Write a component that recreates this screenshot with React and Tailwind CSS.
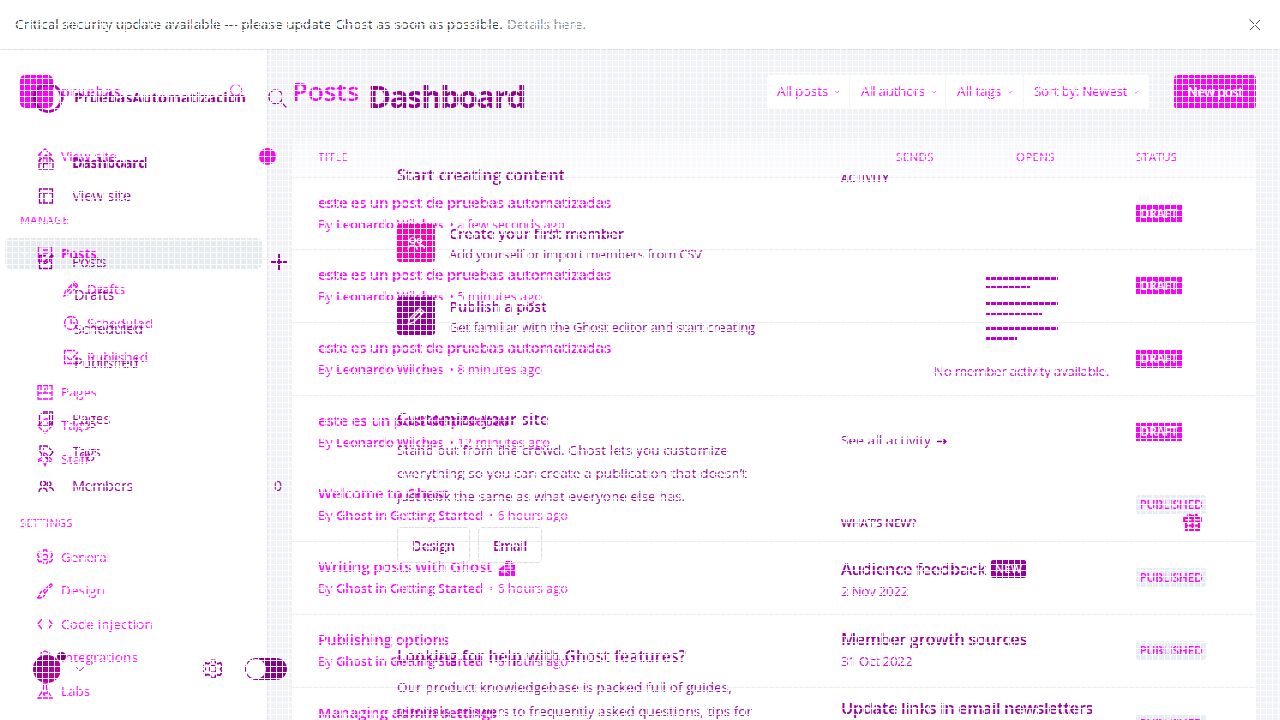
import React, { useLayoutEffect, useRef, useState } from "react";

const SANS = "font-['Open_Sans','Noto_Sans',sans-serif]";

// Single text run whose letter spacing is tuned to a fixed run width.
function Run({ w, className = "", children }) {
  const ref = useRef(null);
  const [spacing, setSpacing] = useState(0);
  useLayoutEffect(() => {
    const natural = ref.current.getBoundingClientRect().width;
    setSpacing((w - natural) / String(children).length);
  }, []);
  return (
    <span ref={ref} className={"inline-block shrink-0 whitespace-nowrap " + className} style={{ letterSpacing: spacing + "px" }}>
      {children}
    </span>
  );
}

function Icon({ className = "size-4", children, sw = 1.3 }) {
  return (
    <svg viewBox="0 0 16 16" className={"shrink-0 " + className} fill="none" stroke="currentColor" strokeWidth={sw}>
      {children}
    </svg>
  );
}

const icons = {
  home: <path d="M1 7.500 8 1l7 6.500M3 6v9h3v-5h4v5h3V6" />,
  house: <path d="M1 15V6.500L8 1l7 5.500V15zM5.500 15V9.500h5V15" />,
  browser: <path d="M1.500 1h13v14h-13zM1.500 5h13M6 5v10" />,
  posts: <path d="M1.500.7h13v14.600h-13zM5.500 4h6M5.500 7h6M5.500 10h3M1.500 11h3v4" />,
  edit: <path d="M8 1.500H1.500v13h12V8M6 10l1-3 7-6 1 1-6.500 7z" />,
  pencil: <path d="M1 15l1.500-5L11.500 1 15 4.500 6 13.500zM10 2.500 13.500 6M4 11l7-7" />,
  clock: <><circle cx="8" cy="8" r="6.500" /><path d="M8 4v4h4" /></>,
  published: <path d="M14 8v6.500H1.500v-13H12M4 8l3.500 3.500L15 3" />,
  pages: <path d="M1 1.500h14v13.500H1zM1 9h14M4 1.500V6M8 4v5M11 2v4" />,
  page: <path d="M3.500 3h8v12H1.500V4zM5 3V1h9.500v12h-3M11.500 4v11" />,
  tag: <path d="M1 8 8 1h3l4 4v3l-7 7zM10 5h1" />,
  tag2: <path d="M2 2h7l6 6-5.500 7L2 8zM5 5h1" />,
  staff: <path d="M5 7a3 3 0 1 1 5 0M1 12c1-4 5-4 7 3 1-5 4-7 7-3M1 9l3-2M12 6l3 3" />,
  members: <path d="M1 14c0-5 8-5 8 0M5 3a2.500 2.500 0 1 0 0 5 2.500 2.500 0 0 0 0-5M11 4a2 2 0 1 0 0 4 2 2 0 0 0 0-4M10.500 10c3-1 5 1 5 3" />,
  gear: <><circle cx="8" cy="8" r="2.700" /><path d="M6.500 1h3l.5 2 2 .8L14 3l1.500 3-1.500 2 1.500 2.500L13.500 13l-2-.5-1.500.8-.5 2h-3l-.5-2-2-1-2 .7-1.500-3L2 8 .5 6 2 3l2 .8L6 3z" /></>,
  brush: <path d="M6 8 14 .8l1.200 1.200L8 10zM6 8c-4 0-2 5-5.500 6.800C4 15.500 8 14 8 10" />,
  code: <path d="M5 3 .8 8 5 13M11 3l4.200 5L11 13" />,
  modules: <path d="M8 1 4 3v4l4 2 4-2V3zM4 7 1 9v4l3 2 4-2V9M12 7l3 2v4l-3 2-4-2V9" />,
  labs: <path d="M5.500 1h5M6.500 1v5L1 15h14L9.500 6V1M4 10h8M6 12l1-1 1 2" />,
  search: <><circle cx="7" cy="7" r="5.500" /><path d="m11 11 4.500 4.500" /></>,
  chevron: <path d="m2 5 6 6 6-6" />,
  plus: <path d="M8 0v16M0 8h16" />,
  gift: <path d="M1 5h14v3H1zM2.500 8h11v7h-11zM8 5v10M8 5C2 5 4 0 8 4c4-4 6 1 0 1M2.500 11.500h11" />,
};

function NavA({ icon, w, children }) {
  return (
    <div className="flex h-5 items-center gap-2 pl-[37px]">
      <Icon>{icons[icon]}</Icon>
      <Run w={w} className="text-[13.500px]">{children}</Run>
    </div>
  );
}

function SubA({ icon, w, children }) {
  return (
    <div className="flex h-5 items-center gap-2 pl-[63px]">
      <Icon>{icons[icon]}</Icon>
      <Run w={w} className="text-[13.500px]">{children}</Run>
    </div>
  );
}

function NavB({ icon, w, bold, children }) {
  return (
    <div className="flex h-5 items-center gap-[18px] pl-[38px]">
      <Icon>{icons[icon]}</Icon>
      <Run w={w} className={bold ? "pt-px text-[14.500px] font-bold" : "text-[14.500px]"}>{children}</Run>
    </div>
  );
}

function SidebarA() {
  return (
    <aside className="w-[268px] shrink-0 border-r border-[#e3e7ec] bg-white text-[#ff00ff]">
      <div className="mt-6 flex h-[34px] items-center pl-5">
        <div className="size-[33px] rounded-[5px] bg-[#ff00ff]" />
        <Run w={60} className="ml-2 text-[14px] font-semibold">pruebas</Run>
        <Icon className="ml-[108px] size-4" sw={1}>{icons.search}</Icon>
      </div>
      <div className="mt-[38px] flex h-5 items-center">
        <NavA icon="home" w={56}>View site</NavA>
        <span className="relative ml-auto mr-[-9px] size-[17px] shrink-0 rounded-full bg-[#ff00ff]" />
      </div>
      <div className="mt-11 flex h-5 items-center pl-5"><Run w={49} className="text-[11px]">MANAGE</Run></div>
      <div className="ml-[5px] mr-[5px] mt-2 flex h-[31px] items-center rounded-[5px] bg-[#e5eaef] pl-4">
        <Icon className="size-2 text-white" sw={2}>{icons.chevron}</Icon>
        <Icon className="ml-2 size-4">{icons.posts}</Icon>
        <Run w={36} className="ml-2 pt-px text-[13.500px] font-bold">Posts</Run>
      </div>
      <div className="mt-[10px] flex flex-col gap-[14px]">
        <SubA icon="pencil" w={38}>Drafts</SubA>
        <SubA icon="clock" w={66}>Scheduled</SubA>
        <SubA icon="published" w={61}>Published</SubA>
      </div>
      <div className="mt-[15px] flex flex-col gap-[13.500px]">
        <NavA icon="pages" w={36}>Pages</NavA>
        <NavA icon="tag" w={28}>Tags</NavA>
        <NavA icon="staff" w={28}>Staff</NavA>
      </div>
      <div className="mt-11 flex h-5 items-center pl-5"><Run w={53} className="text-[11px]">SETTINGS</Run></div>
      <div className="mt-[14px] flex flex-col gap-[13.500px]">
        <NavA icon="gear" w={49}>General</NavA>
        <NavA icon="brush" w={44}>Design</NavA>
        <NavA icon="code" w={92}>Code injection</NavA>
        <NavA icon="modules" w={77}>Integrations</NavA>
        <NavA icon="labs" w={29}>Labs</NavA>
      </div>
    </aside>
  );
}

const rows = [
  ["este es un post de pruebas automatizadas", 293, "Leonardo Wilches", 107, "• a few seconds ago", 116],
  ["este es un post de pruebas automatizadas", 293, "Leonardo Wilches", 107, "• 5 minutes ago", 93],
  ["este es un post de pruebas automatizadas", 293, "Leonardo Wilches", 107, "• 8 minutes ago", 93],
  ["este es un post de pruebas", 191, "Leonardo Wilches", 107, "• 12 minutes ago", 101],
  ["Welcome to Ghost", 130, "Ghost in Getting Started", 147, "• 6 hours ago", 79],
  ["Writing posts with Ghost", 174, "Ghost in Getting Started", 147, "• 6 hours ago", 79],
  ["Publishing options", 131, "Ghost in Getting Started", 147, "• 6 hours ago", 79],
  ["Managing admin settings", 179, "Ghost in Getting Started", 147, "• 6 hours ago", 79],
];

function Stamp() {
  return (
    <svg viewBox="0 0 18 16" className="ml-1.5 mt-[3px] h-4 w-[18px]" fill="#ff00ff">
      <path d="M8 1h6l1 4h2v11H1V9l4-4z" />
      <path d="M2 8l5-4M6 8h9M11 2v6M3 12h6l2 2" stroke="#fff" strokeWidth="1" />
    </svg>
  );
}

function MainA() {
  return (
    <main className="flex min-w-0 flex-1 flex-col bg-[#f1f2f5] pl-6 pr-6 text-[#ff00ff]">
      <div className="mt-6 flex h-[35px] shrink-0 items-center">
        <Run w={67} className="text-[26px] font-semibold">Posts</Run>
        <div className="ml-auto flex h-[34px] items-center rounded bg-white text-[13.500px]">
          <div className="flex h-full w-[83px] items-center gap-1.5 border-r border-[#f2f3f6] pl-[10px]"><Run w={51}>All posts</Run><Icon className="size-1.5" sw={1.5}>{icons.chevron}</Icon></div>
          <div className="flex h-full w-[96px] items-center gap-1.5 border-r border-[#f2f3f6] pl-[11px]"><Run w={64}>All authors</Run><Icon className="size-1.5" sw={1.5}>{icons.chevron}</Icon></div>
          <div className="flex h-full w-[78px] items-center gap-1.5 border-r border-[#f2f3f6] pl-[11px]"><Run w={44}>All tags</Run><Icon className="size-1.5" sw={1.5}>{icons.chevron}</Icon></div>
          <div className="flex h-full w-[125px] items-center gap-1.5 pl-[10px]"><Run w={93}>Sort by: Newest</Run><Icon className="size-1.5" sw={1.5}>{icons.chevron}</Icon></div>
        </div>
        <div className="ml-[25px] flex h-[34px] w-[82px] items-center justify-center rounded bg-[#ff00ff] pt-0.5 text-white"><Run w={55} className="text-[13.500px] font-semibold">New post</Run></div>
      </div>
      <div className="mt-[29px] min-h-0 flex-1 overflow-hidden rounded-t bg-white shadow-[0_0_1px_#dde2e8]">
        <div className="flex h-10 items-center border-b border-[#e5eef5] bg-linear-to-b from-[#f7f8fa] to-[#fcfcfe] pb-0.5 pl-[26px] text-[11.500px]">
          <div className="w-[578px]"><Run w={30}>TITLE</Run></div>
          <div className="w-[120px]"><Run w={38}>SENDS</Run></div>
          <div className="w-[120px]"><Run w={39}>OPENS</Run></div>
          <Run w={41}>STATUS</Run>
        </div>
        {rows.map(([title, tw, by, bw, ago, aw], i) => (
          <div key={i} className="flex h-[73px] border-b border-[#e5eef5] pl-[26px] nth-2:h-[72px]">
            <div className="w-[818px] pt-[14px]">
              <div className="flex h-5 items-center"><Run w={tw} className="text-[15px] font-semibold">{title}</Run>{i === 5 && <Stamp />}</div>
              <div className="mt-[3px] flex h-5 items-center text-[13px]"><Run w={14}>By</Run><Run w={bw} className="ml-1 font-semibold">{by}</Run><Run w={aw} className="ml-1.5">{ago}</Run></div>
            </div>
            <div className="pt-[27px]">
              {i < 4
                ? <div className="flex h-[18px] w-[46px] items-center justify-center bg-[#ff00ff] text-white"><Run w={37} className="text-[12px] font-semibold">DRAFT</Run></div>
                : <div className="-mt-px flex h-[19px] w-[70px] items-center justify-center rounded-[3px] bg-[#e5eef5]"><Run w={63} className="text-[12px] font-semibold">PUBLISHED</Run></div>}
            </div>
          </div>
        ))}
      </div>
    </main>
  );
}

function SidebarB() {
  return (
    <aside className="flex w-[292px] shrink-0 flex-col text-[#99009b]">
      <div className="mt-8 flex h-[31px] items-center pl-[33px]">
        <div className="size-[30px] rounded-full border-[3px] border-[#b000b0] border-l-[#770077]" />
        <Run w={172} className="ml-[11px] pt-px text-[14.500px] font-bold">PruebasAutomatizacion</Run>
        <Icon className="ml-[21px] size-[20px]" sw={1}>{icons.search}</Icon>
      </div>
      <div className="mt-[39px]"><NavB icon="house" w={75} bold>Dashboard</NavB></div>
      <div className="mt-[14px]"><NavB icon="browser" w={59}>View site</NavB></div>
      <div className="mt-[46px] flex items-center">
        <NavB icon="edit" w={34}>Posts</NavB>
        <Icon className="ml-auto mr-[5px] size-4" sw={2}>{icons.plus}</Icon>
      </div>
      <div className="mt-[13px] flex flex-col gap-[14px] pl-[74px] text-[14.500px]">
        <div className="flex h-5 items-center"><Run w={40}>Drafts</Run></div>
        <div className="flex h-5 items-center"><Run w={69}>Scheduled</Run></div>
        <div className="flex h-5 items-center"><Run w={64}>Published</Run></div>
      </div>
      <div className="mt-9"><NavB icon="page" w={38}>Pages</NavB></div>
      <div className="mt-[13px]"><NavB icon="tag2" w={28}>Tags</NavB></div>
      <div className="mt-[13px] flex items-center">
        <NavB icon="members" w={61}>Members</NavB>
        <span className="ml-auto mr-[10px] text-[14px]">0</span>
      </div>
      <div className="mt-[159px] flex h-7 items-center pl-[33px]">
        <div className="relative size-7 rounded-full bg-linear-to-br from-[#80007c] to-[#d500aa]"><span className="absolute -right-[5px] -top-[3px] size-[9px] rounded-full bg-[#80007c]" /></div>
        <Icon className="ml-[14px] size-2.5" sw={1.5}>{icons.chevron}</Icon>
        <Icon className="ml-[118px] size-5">{icons.gear}</Icon>
        <div className="ml-[22px] flex h-[22px] w-[42px] items-center rounded-full bg-[#880088] pl-px"><span className="size-5 rounded-full bg-white" /></div>
      </div>
    </aside>
  );
}

function Line({ w, className = "", children }) {
  return <div className="flex h-5 items-center"><Run w={w} className={className}>{children}</Run></div>;
}

function Step({ tone, icon, titleWidth, title, textWidth, text }) {
  return (
    <div className="flex h-[42px] items-center gap-[14px]">
      <div className={"mt-[-2px] flex size-[38px] shrink-0 items-center justify-center rounded-[3px] text-white " + tone}>
        <Icon className="size-[18px]" sw={1.2}>{icons[icon]}</Icon>
      </div>
      <div>
        <Line w={titleWidth} className="text-[14.500px] font-semibold">{title}</Line>
        <div className="mt-px"><Line w={textWidth} className="pt-px text-[13px]">{text}</Line></div>
      </div>
    </div>
  );
}

function MainB() {
  return (
    <div className="flex flex-1 text-[#99009b]">
      <div className="ml-[76px] flex w-[473px] flex-col">
        <div className="mt-[26px] flex h-10 items-center"><Run w={157} className="text-[31px] font-bold">Dashboard</Run></div>
        <div className="ml-[29px] mt-12">
          <Line w={168} className="pt-[3px] text-[15.500px] font-semibold">Start creating content</Line>
          <div className="mt-[39px]"><Step tone="bg-[#ff00b8]" icon="members" titleWidth={175} title="Create your first member" textWidth={253} text="Add yourself or import members from CSV" /></div>
          <div className="mt-[31px]"><Step tone="bg-[#99009b]" icon="pencil" titleWidth={98} title="Publish a post" textWidth={306} text="Get familiar with the Ghost editor and start creating" /></div>
          <div className="mt-[70px]"><Line w={152} className="pt-[3px] text-[15.500px] font-semibold">Customize your site</Line></div>
          <div className="mt-[12px] flex flex-col gap-[3px] text-[13.500px]">
            <Line w={331}>Stand out from the crowd. Ghost lets you customize</Line>
            <Line w={350}>everything so you can create a publication that doesn’t</Line>
            <Line w={288}>just look the same as what everyone else has.</Line>
          </div>
          <div className="mt-[21px] flex gap-2 text-[13.500px] font-semibold">
            <div className="flex h-9 w-[73px] items-center justify-center rounded-sm border border-[#dddddd] pt-0.5"><Run w={43}>Design</Run></div>
            <div className="flex h-9 w-16 items-center justify-center rounded-sm border border-[#dddddd] pt-0.5"><Run w={34}>Email</Run></div>
          </div>
          <div className="mt-[82px]"><Line w={289} className="pt-[3px] text-[15.500px] font-semibold">Looking for help with Ghost features?</Line></div>
          <div className="mt-[12px] flex flex-col gap-1 text-[13.500px]">
            <Line w={335}>Our product knowledgebase is packed full of guides,</Line>
            <Line w={355}>tutorials, answers to frequently asked questions, tips for</Line>
          </div>
        </div>
      </div>
      <div className="w-[365px] pt-[118px]">
        <Line w={48} className="text-[11px] font-semibold">ACTIVITY</Line>
        <div className="ml-[145px] mt-[89px] flex flex-col">
          <span className="h-[3px] w-[72px] bg-[#bf00d0]" />
          <span className="mt-[6px] h-[3px] w-[44px] bg-[#bf00d0]" />
          <span className="mt-[13px] h-[3px] w-[72px] bg-[#bf00d0]" />
          <span className="mt-[7px] h-[3px] w-[56px] bg-[#bf00d0]" />
          <span className="mt-[12px] h-[3px] w-[72px] bg-[#bf00d0]" />
          <span className="mt-[7px] h-[3px] w-[31px] bg-[#bf00d0]" />
        </div>
        <div className="ml-[93px] mt-[21px] text-[#c800d2]"><Line w={175} className="text-[13.500px]">No member activity available.</Line></div>
        <div className="mt-[49px] flex h-5 items-center text-[13.500px]">
          <Run w={90}>See all activity</Run>
          <svg viewBox="0 0 10 8" className="ml-1.5 mt-[3px] h-2 w-[10px]" fill="none" stroke="currentColor" strokeWidth="1.300"><path d="M0 3.500h9M6.500 1l2.500 2.500L6.500 6" /></svg>
        </div>
        <div className="mt-[63px] flex h-5 items-center justify-between">
          <Run w={75} className="text-[11.500px] font-semibold">WHAT’S NEW?</Run>
          <Icon className="-mt-[3px] mr-[4px] size-[19px] text-[#ff00cc]" sw={1.8}>{icons.gift}</Icon>
        </div>
        <div className="mt-[26px] flex h-5 items-center gap-[5px]">
          <Run w={145} className="text-[16.500px] font-semibold">Audience feedback</Run>
          <div className="flex h-[18px] w-[35px] items-center justify-center rounded-[2px] bg-[#99009b] text-white"><Run w={27} className="text-[11.500px] font-semibold">NEW</Run></div>
        </div>
        <div className="mt-[2px]"><Line w={67} className="text-[13.500px] text-[#c800d2]">2 Nov 2022</Line></div>
        <div className="mt-[28px]"><Line w={186} className="text-[16.500px] font-semibold">Member growth sources</Line></div>
        <div className="mt-[2px]"><Line w={71} className="text-[13.500px] text-[#c800d2]">31 Oct 2022</Line></div>
        <div className="mt-[27px]"><Line w={252} className="text-[16.500px] font-semibold">Update links in email newsletters</Line></div>
      </div>
    </div>
  );
}

export default function App() {
  return (
    <div className={"relative flex h-[720px] w-[1280px] flex-col overflow-hidden bg-white " + SANS}>
      <header className="flex h-[50px] shrink-0 items-center border-b border-[#dde1e5] pl-[15px] pr-[19px] text-[13.500px] text-[#30363c]">
        <Run w={488}>Critical security update available --- please update Ghost as soon as possible.</Run>
        <Run w={79} className="ml-1 text-[#7d858d]">Details here.</Run>
        <svg viewBox="0 0 12 12" className="ml-auto size-3" stroke="#444" fill="none"><path d="m.5.5 11 11m0-11-11 11" /></svg>
      </header>
      <div className="flex min-h-0 flex-1">
        <SidebarA />
        <MainA />
      </div>
      <div className="absolute inset-x-0 bottom-0 top-[50px] flex overflow-hidden">
        <SidebarB />
        <MainB />
      </div>
      <div className="absolute inset-0 bg-[linear-gradient(to_right,white_1px,transparent_1px),linear-gradient(to_bottom,white_1px,transparent_1px)] bg-[size:6px_6px]" />
    </div>
  );
}
